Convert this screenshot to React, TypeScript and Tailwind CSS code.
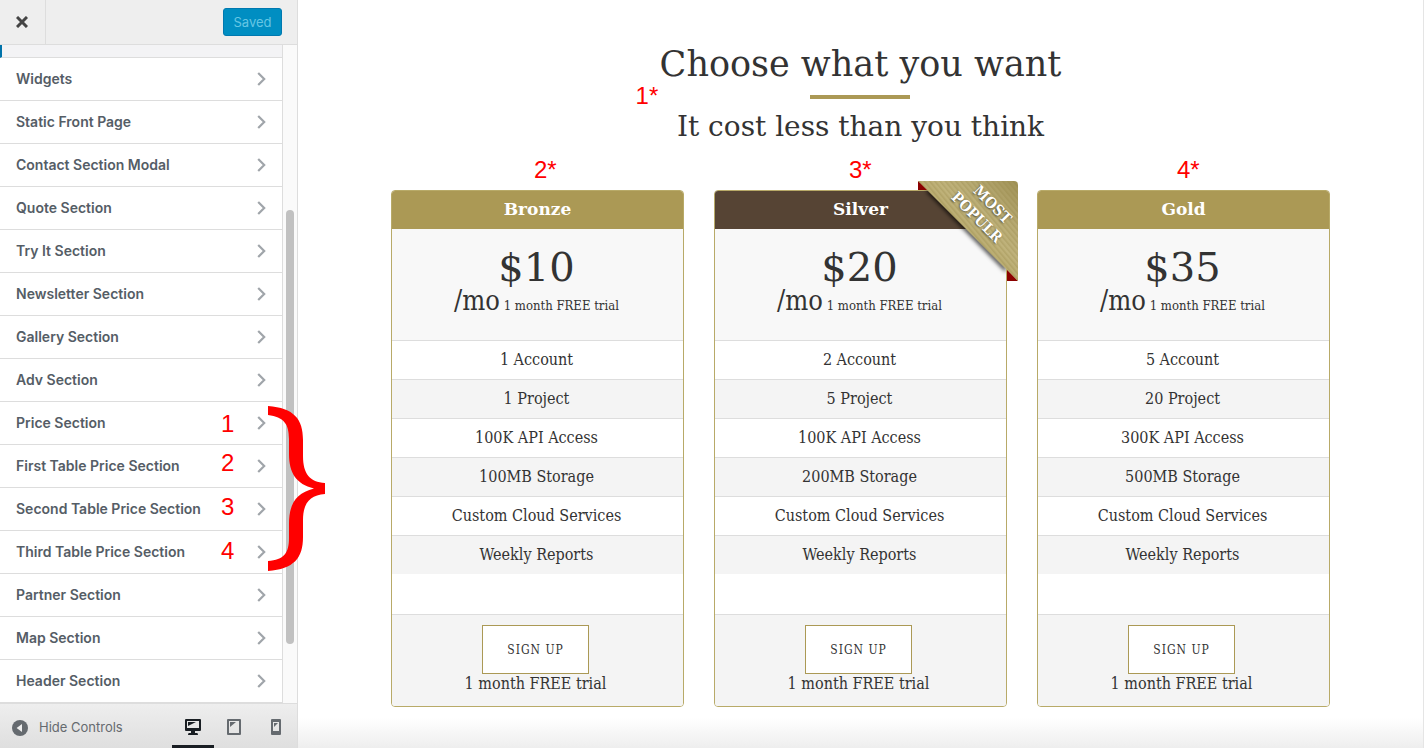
import React from "react";

const sections = [
  "Widgets",
  "Static Front Page",
  "Contact Section Modal",
  "Quote Section",
  "Try It Section",
  "Newsletter Section",
  "Gallery Section",
  "Adv Section",
  "Price Section",
  "First Table Price Section",
  "Second Table Price Section",
  "Third Table Price Section",
  "Partner Section",
  "Map Section",
  "Header Section",
];

type Plan = {
  name: string;
  price: string;
  features: string[];
  note: string;
  noteClass: string;
  popular?: boolean;
};

const plans: Plan[] = [
  {
    name: "Bronze",
    price: "$10",
    features: ["1 Account", "1 Project", "100K API Access", "100MB Storage", "Custom Cloud Services", "Weekly Reports"],
    note: "2*",
    noteClass: "left-[142px]",
  },
  {
    name: "Silver",
    price: "$20",
    features: ["2 Account", "5 Project", "100K API Access", "200MB Storage", "Custom Cloud Services", "Weekly Reports"],
    note: "3*",
    noteClass: "left-[134px]",
    popular: true,
  },
  {
    name: "Gold",
    price: "$35",
    features: ["5 Account", "20 Project", "300K API Access", "500MB Storage", "Custom Cloud Services", "Weekly Reports"],
    note: "4*",
    noteClass: "left-[139px]",
  },
];

const noteText = "absolute font-['Liberation_Sans',Arial,sans-serif] text-2xl leading-6 text-[#ff0000]";

function Chevron() {
  return (
    <svg width="9" height="14" viewBox="0 0 9 14" fill="none" stroke="#a0a5aa" strokeWidth="2.2" aria-hidden="true">
      <path d="M1.2 1 L7.2 7 L1.2 13" />
    </svg>
  );
}

function Ribbon() {
  return (
    <svg className="absolute -top-2.5 -right-3 overflow-visible" width="100" height="100" viewBox="0 0 100 100">
      <defs>
        <linearGradient id="ribbonFill" x1="0" y1="1" x2="1" y2="0">
          <stop offset="0.45" stopColor="#b8aa6c" />
          <stop offset="0.6" stopColor="#c0b37c" />
          <stop offset="0.75" stopColor="#b8ab74" />
          <stop offset="1" stopColor="#a09256" />
        </linearGradient>
        <pattern id="ribbonLines" width="4" height="4" patternUnits="userSpaceOnUse" patternTransform="rotate(-40)">
          <rect width="1.6" height="4" fill="#8f8040" fillOpacity="0.28" />
        </pattern>
        <filter id="ribbonShadow" x="-20%" y="-20%" width="140%" height="140%">
          <feGaussianBlur stdDeviation="2" />
        </filter>
        <clipPath id="ribbonClip">
          <path d="M0 9 H88 V100 H0Z" />
        </clipPath>
      </defs>
      <path d="M0 0 V9 H12Z M89 88 V100 H100Z" fill="#8b0000" />
      <path d="M8 10 L88 91 V86 L12 8Z" fill="#000" fillOpacity="0.85" filter="url(#ribbonShadow)" clipPath="url(#ribbonClip)" />
      <path d="M0 0 H96 Q100 0 100 4 V100Z" fill="url(#ribbonFill)" />
      <path d="M0 0 H96 Q100 0 100 4 V100Z" fill="url(#ribbonLines)" />
      <g
        transform="translate(66 32) rotate(45)"
        textAnchor="middle"
        className="fill-white font-['DejaVu_Serif_Condensed','DejaVu_Serif',serif] text-[15px] font-bold [text-shadow:0_1px_2px_rgba(0,0,0,0.6)]"
      >
        <text x="0" y="-7">MOST</text>
        <text x="-2" y="13">POPULR</text>
      </g>
    </svg>
  );
}

function PlanCard({ plan }: { plan: Plan }) {
  return (
    <article className="relative rounded border border-[#b8aa68] bg-white">
      <span className={`${noteText} -top-[33px] ${plan.noteClass}`}>{plan.note}</span>
      <h3
        className={`h-[38px] rounded-t-[3px] text-center font-['DejaVu_Serif',serif] text-[17px] leading-9 font-bold text-white ${
          plan.popular ? "bg-[#564434]" : "bg-[#ab9955]"
        }`}
      >
        {plan.name}
      </h3>
      <div className="h-[111px] bg-[#f8f8f8] pt-4 pr-0.5 text-center text-[#333]">
        <p className="font-['DejaVu_Serif',serif] text-[40px] leading-11">{plan.price}</p>
        <p className="font-['DejaVu_Serif_Condensed','DejaVu_Serif',serif] text-[27px] leading-6">
          /mo<span className="text-[13px]"> 1 month FREE trial</span>
        </p>
      </div>
      <ul className="pb-10 text-center font-['DejaVu_Serif_Condensed','DejaVu_Serif',serif] text-base leading-[38px] text-[#333]">
        {plan.features.map((f) => (
          <li key={f} className="border-t border-[#ddd] pr-0.5 even:bg-[#f4f4f4]">
            {f}
          </li>
        ))}
      </ul>
      <div className="flex flex-col items-center rounded-b-[3px] border-t border-[#ddd] bg-[#f4f4f4] pt-2.5 pr-1 pb-3 font-['DejaVu_Serif_Condensed','DejaVu_Serif',serif] text-[#333]">
        <button type="button" className="h-[49px] w-[107px] border border-[#ab9955] bg-white text-xs tracking-[1px]">
          SIGN UP
        </button>
        <p className="text-base leading-5">1 month FREE trial</p>
      </div>
      {plan.popular && <Ribbon />}
    </article>
  );
}

function Sidebar() {
  return (
    <aside className="flex w-[298px] shrink-0 flex-col border-r border-[#ddd] bg-[#eee] font-[Inter,sans-serif]">
      <header className="flex h-[45px] items-center justify-between border-b border-[#ddd] pr-[15px]">
        <button type="button" aria-label="Close" className="flex h-11 w-[46px] items-center justify-center border-r border-[#ddd] pr-0.5">
          <svg width="12" height="12" viewBox="0 0 12 12" stroke="#444" strokeWidth="3" aria-hidden="true">
            <path d="M1 1 L11 11 M11 1 L1 11" />
          </svg>
        </button>
        <button
          type="button"
          className="h-7 w-[59px] rounded-[3px] border border-[#0079b0] bg-[#008ec2] pt-0.5 text-[13px] text-[#66c6e4]"
        >
          Saved
        </button>
      </header>

      <div className="flex bg-[#fafafa]">
        <nav className="flex-1 border-r border-[#ddd] bg-white">
          <div className="h-[13px] border-b border-l-2 border-b-[#ddd] border-l-[#0073aa] bg-[#f3f3f5]" />
          {sections.map((s) => (
            <button
              key={s}
              type="button"
              className="flex h-[43px] w-full items-center justify-between border-b border-[#ddd] pr-4 pl-4 text-left text-sm font-semibold text-[#555d66]"
            >
              {s}
              <Chevron />
            </button>
          ))}
        </nav>
        <div className="flex w-3.5 justify-center pt-[165px]">
          <div className="h-[434px] w-2 rounded-full bg-[#c1c1c1]" />
        </div>
      </div>

      <footer className="flex flex-1 items-center justify-between border-t border-[#ddd] bg-linear-to-b from-[#eee] to-[#dfdfdf] pl-3 text-[#656a6f]">
        <button type="button" className="flex items-center gap-[11px] pt-[3px] text-[13px]">
          <svg width="16" height="16" viewBox="0 0 16 16" aria-hidden="true">
            <circle cx="8" cy="8" r="8" fill="#656a6f" />
            <path d="M10 4 V12 L4.6 8Z" fill="#eee" />
          </svg>
          Hide Controls
        </button>
        <div className="flex self-stretch">
          <button type="button" aria-label="Desktop" className="flex w-[42px] items-center justify-center border-b-3 border-[#191e23] pt-1">
            <svg width="16" height="16" viewBox="0 0 16 16" aria-hidden="true">
              <path fill="#191e23" fillRule="evenodd" d="M1 0H15Q16 0 16 1V11Q16 12 15 12H10V14H12Q13 14 13 16H3Q3 14 4 14H6V12H1Q0 12 0 11V1Q0 0 1 0Z M2 2V9H14V2Z" />
              <path d="M3 3H11L3 7Z" fill="#191e23" />
            </svg>
          </button>
          <button type="button" aria-label="Tablet" className="flex w-10 items-center justify-center pt-px">
            <svg width="14" height="16" viewBox="0 0 14 16" aria-hidden="true">
              <path fill="#656a6f" fillRule="evenodd" d="M1 0H13Q14 0 14 1V15Q14 16 13 16H1Q0 16 0 15V1Q0 0 1 0Z M2 2V14H12V2Z" />
              <path d="M3 3H9L3 8Z" fill="#656a6f" />
            </svg>
          </button>
          <button type="button" aria-label="Mobile" className="flex w-[43px] items-center justify-center pt-px">
            <svg width="10" height="16" viewBox="0 0 10 16" aria-hidden="true">
              <path fill="#656a6f" fillRule="evenodd" d="M1 0H9Q10 0 10 1V15Q10 16 9 16H1Q0 16 0 15V1Q0 0 1 0Z M2 3V12H8V3Z" />
              <path d="M3 4H7L3 8Z" fill="#656a6f" />
            </svg>
          </button>
        </div>
      </footer>
    </aside>
  );
}

function SidebarNotes() {
  return (
    <div className="pointer-events-none absolute top-0 left-0">
      <span className={`${noteText} top-[412px] left-[221px]`}>1</span>
      <span className={`${noteText} top-[451px] left-[221px]`}>2</span>
      <span className={`${noteText} top-[495px] left-[221px]`}>3</span>
      <span className={`${noteText} top-[539px] left-[221px]`}>4</span>
      <svg className="absolute top-[406px] left-[268px] max-w-none" width="57" height="165" viewBox="0 0 57 165">
        <path
          fill="#ff0000"
          d="M0 0C26 2 35 13 35 34V50C35 68 42 76 57 77V88C42 89 35 97 35 114V131C35 152 26 163 0 165V155C16 154 21 147 21 132V118C21 98 28 87 46 82.5C28 78 21 67 21 48V33C21 18 16 11 0 9Z"
        />
      </svg>
    </div>
  );
}

export default function App() {
  return (
    <div className="relative flex min-h-screen bg-white">
      <Sidebar />
      <main className="flex flex-1 flex-col items-center border-r border-[#e5e5e5] bg-linear-to-b from-white from-96% to-[#eee] px-8 pt-11">
        <header className="relative flex flex-col items-center text-center font-['DejaVu_Serif',serif] text-[#333]">
          <h1 className="text-[35px] leading-10">Choose what you want</h1>
          <div className="mt-[11px] h-1 w-[100px] bg-[#ab9955]" />
          <h2 className="mt-3 text-[28px] leading-8">It cost less than you think</h2>
          <span className={`${noteText} top-10 -left-6`}>1*</span>
        </header>
        <section className="mt-[47px] grid w-full max-w-[939px] grid-cols-3 gap-[30px]">
          {plans.map((p) => (
            <PlanCard key={p.name} plan={p} />
          ))}
        </section>
      </main>
      <SidebarNotes />
    </div>
  );
}
